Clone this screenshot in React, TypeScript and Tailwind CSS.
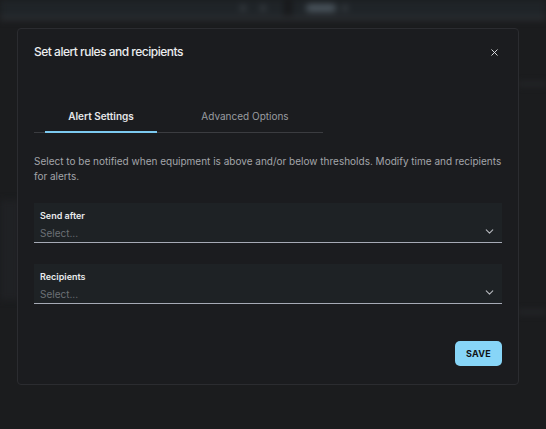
import React, { useState } from 'react'
import { ChevronDown, X } from 'lucide-react'

const font = { fontFamily: 'Inter, "Noto Sans", sans-serif' }

type SelectProps = {
  label: string
}

const SelectField = ({ label }: SelectProps) => {
  return (
    <div className="flex flex-col bg-[#1e2225] border-b border-[#a6aab5] px-[6px] pt-[7px] h-[40px]">
      <span className="text-[9px] font-semibold text-[#e9eaec] leading-[12px]">{label}</span>
      <div className="flex items-center justify-between mt-[4px]">
        <span className="text-[10px] text-[#6c7075] leading-[14px]">Select...</span>
        <ChevronDown className="w-[13px] h-[13px] text-[#b4b7bc] -mt-[3px]" strokeWidth={2} />
      </div>
    </div>
  )
}

const App = () => {
  const [tab, setTab] = useState(0)

  return (
    <div className="relative w-[546px] h-[429px] overflow-hidden bg-[#1b1c1e]" style={font}>
      {/* blurred page behind the dialog */}
      <div className="absolute inset-0 blur-[3px]">
        <div className="h-[16px] bg-[#1f2428] flex items-center">
          <div className="ml-[240px] w-[6px] h-[6px] rounded-full bg-[#3a3f44]" />
          <div className="ml-[14px] w-[6px] h-[6px] rounded-full bg-[#3a3f44]" />
          <div className="ml-[18px] w-[8px] h-[16px] bg-[#17181a]" />
          <div className="ml-[14px] w-[30px] h-[8px] rounded bg-[#4a545c]" />
          <div className="ml-[6px] w-[6px] h-[6px] rounded-full bg-[#3a3f44]" />
        </div>
        <div className="h-[4px] bg-[#2c2f33]" />
        <div className="absolute left-0 top-[236px] w-[20px] h-[5px] bg-[#2e3134]" />
        <div className="absolute left-0 top-[287px] w-[20px] h-[5px] bg-[#2e3134]" />
        <div className="absolute left-0 top-[200px] w-[20px] h-[100px] bg-[#1f2124]" />
        <div className="absolute right-0 top-[82px] w-[28px] h-[4px] bg-[#26282b]" />
        <div className="absolute right-0 top-[310px] w-[28px] h-[4px] bg-[#26282b]" />
      </div>

      {/* dialog */}
      <div className="absolute left-[17px] top-[28px] w-[502px] h-[357px] rounded-[4px] border border-[#2b2c30] bg-[#1b1c1f] flex flex-col">
        <div className="flex items-center justify-between pl-[16px] pr-[18px] pt-[15px]">
          <h2 className="text-[12px] font-medium tracking-[-0.5px] text-[#eceef0] leading-[16px]">
            Set alert rules and recipients
          </h2>
          <X className="w-[11px] h-[11px] text-[#e4e6e8]" strokeWidth={2} />
        </div>

        <div className="mt-[46px] ml-[16px] w-[289px] flex border-b border-[#3b3c40] pl-[11px]">
          {['Alert Settings', 'Advanced Options'].map((t, i) => (
            <button
              key={t}
              onClick={() => setTab(i)}
              className={
                i === tab
                  ? 'shrink-0 w-[112px] h-[27px] text-[10px] font-semibold text-[#e6e7e9] border-b-2 border-[#7cc9ef] -mb-[1px] pb-[4px]'
                  : 'shrink-0 w-[176px] h-[27px] text-[10px] font-normal text-[#9a9ca1] border-b-2 border-transparent -mb-[1px] pb-[4px]'
              }
            >
              {t}
            </button>
          ))}
        </div>

        <p className="mx-[16px] mt-[21px] text-[10px] leading-[15px] text-[#a3a5aa]">
          Select to be notified when equipment is above and/or below thresholds. Modify time and recipients for alerts.
        </p>

        <div className="mx-[16px] mt-[19px] flex flex-col gap-[21px]">
          <SelectField label="Send after" />
          <SelectField label="Recipients" />
        </div>

        <div className="flex justify-end mx-[16px] mt-[37px]">
          <button className="w-[47px] h-[25px] rounded-[5px] bg-[#87d5f7] text-[9px] font-bold text-[#101214] tracking-[0.3px]">
            SAVE
          </button>
        </div>
      </div>
    </div>
  )
}

export default App
